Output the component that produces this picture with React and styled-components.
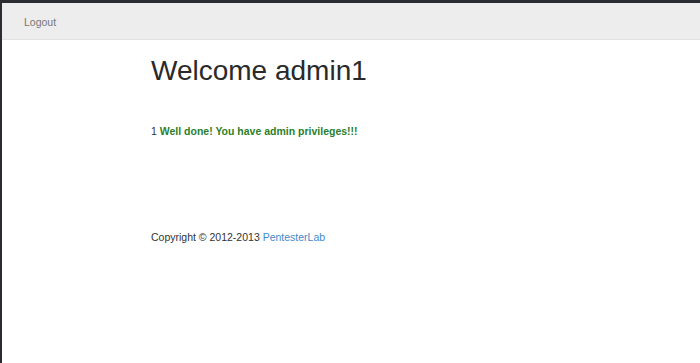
import React from "react";
import styled, { createGlobalStyle } from "styled-components";

const Global = createGlobalStyle`
html, body {
    margin: 0;
    padding: 0;
    background: #ffffff;
}
body {
    font-family: "Liberation Sans", Arial, sans-serif;
    font-size: 10.5px;
    line-height: 15px;
    color: #333;
}
`

const Frame = styled.div `
min-height: 363px;
box-sizing: border-box;
border-top: 3px solid #2b2d33;
border-left: 2px solid #2b2d33;
background: #fff;
`

const Navbar = styled.nav `
height: 37px;
box-sizing: border-box;
padding-top: 3px;
background-color: #ededed;
border-bottom: 1px solid #e2e2e2;
display: flex;
align-items: center;
padding-left: 22px;
`

const NavLink = styled.a `
color: #777;
font-size: 10.5px;
text-decoration: none;
cursor: pointer;

&:hover {
    color: #333;
}
`

const Container = styled.div `
padding-left: 149px;
padding-top: 16px;
`

const Title = styled.h1 `
margin: 0;
font-size: 28px;
line-height: 30px;
font-weight: normal;
color: #2a2a2a;
`

const Message = styled.p `
margin: 38px 0 0 0;
font-size: 10.5px;
line-height: 15px;
color: #333;
`

const Success = styled.strong `
color: #2b7f2b;
font-weight: bold;
`

const Footer = styled.footer `
margin-top: 91px;
font-size: 10.5px;
line-height: 15px;
color: #333;
`

const Link = styled.a `
color: #428bca;
text-decoration: none;
`

export default function App() {
    return(
        <Frame>
            <Global />
            <Navbar>
                <NavLink href="#">Logout</NavLink>
            </Navbar>
            <Container>
                <Title>Welcome admin1</Title>
                <Message>1 <Success>Well done! You have admin privileges!!!</Success></Message>
                <Footer>
                    Copyright © 2012-2013 <Link href="#">PentesterLab</Link>
                </Footer>
            </Container>
        </Frame>
    )
}
